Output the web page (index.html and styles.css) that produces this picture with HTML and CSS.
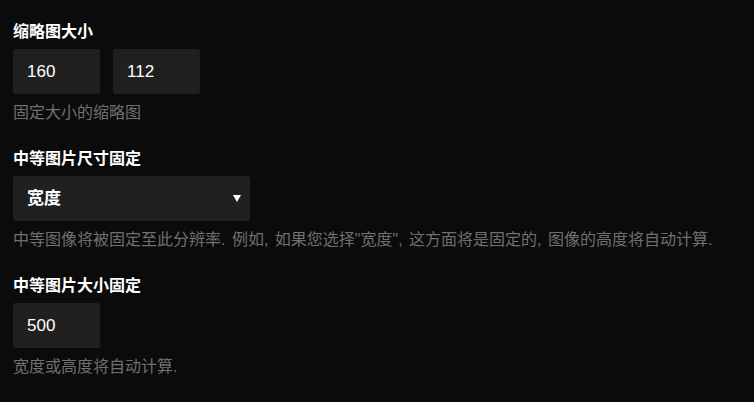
FILE: index.html
```html
<!DOCTYPE html>
<html lang="zh-CN">
<head>
  <meta charset="UTF-8" />
  <title>图片设置</title>
  <link rel="stylesheet" href="styles.css">
</head>
<body>
  <div class="settings">
    <div class="group">
      <label class="label">缩略图大小</label>
      <div class="row">
        <input type="text" class="field" value="160" />
        <input type="text" class="field" value="112" />
      </div>
      <p class="hint">固定大小的缩略图</p>
    </div>

    <div class="group">
      <label class="label">中等图片尺寸固定</label>
      <div class="select-wrap">
        <select class="select">
          <option>宽度</option>
          <option>高度</option>
        </select>
      </div>
      <p class="hint">中等图像将被固定至此分辨率. 例如, 如果您选择"宽度", 这方面将是固定的, 图像的高度将自动计算.</p>
    </div>

    <div class="group">
      <label class="label">中等图片大小固定</label>
      <div class="row">
        <input type="text" class="field" value="500" />
      </div>
      <p class="hint">宽度或高度将自动计算.</p>
    </div>

    <div class="divider"></div>
  </div>
</body>
</html>
```

FILE: styles.css
```css
body {
  margin: 0;
  background: #0b0b0b;
  font-family: "Liberation Sans", "Noto Sans CJK SC", sans-serif;
  color: #fff;
}

.settings {
  padding: 22px 0 0 13px;
}

.group {
  margin-bottom: 24px;
}

.label {
  display: block;
  font-size: 16px;
  font-weight: bold;
  line-height: 20px;
  margin-bottom: 7px;
}

.row {
  display: flex;
  gap: 13px;
}

.field {
  box-sizing: border-box;
  width: 87px;
  height: 45px;
  padding: 0 14px;
  border: none;
  border-radius: 3px;
  background: #202020;
  color: #fff;
  font-family: inherit;
  font-size: 17px;
  outline: none;
}

.select-wrap {
  position: relative;
  width: 237px;
}

.select-wrap::after {
  content: "";
  position: absolute;
  right: 9px;
  top: 19px;
  border-left: 4px solid transparent;
  border-right: 4px solid transparent;
  border-top: 7px solid #fff;
  pointer-events: none;
}

.select {
  appearance: none;
  -webkit-appearance: none;
  box-sizing: border-box;
  width: 100%;
  height: 45px;
  padding: 0 14px;
  border: none;
  border-radius: 3px;
  background: #202020;
  color: #fff;
  font-family: inherit;
  font-size: 17px;
  font-weight: bold;
  outline: none;
}

.hint {
  margin: 7px 0 0;
  font-size: 16px;
  line-height: 24px;
  word-spacing: 2px;
  color: #707070;
}

.divider {
  height: 1px;
  margin-left: -4px;
  background: #1c1c1c;
}
```
